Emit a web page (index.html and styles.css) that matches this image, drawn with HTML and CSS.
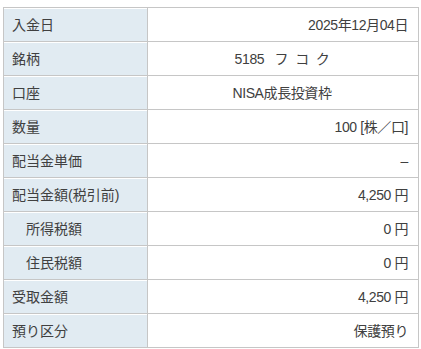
FILE: index.html
```html
<!DOCTYPE html>
<html lang="ja">
<head>
<meta charset="utf-8">
<link rel="stylesheet" href="styles.css">
</head>
<body>
<table class="detail">
  <tr><th>入金日</th><td>2025年12月04日</td></tr>
  <tr><th>銘柄</th><td class="center">5185&nbsp;&nbsp;&nbsp;フ&nbsp;&nbsp;コ&nbsp;&nbsp;ク</td></tr>
  <tr><th>口座</th><td class="center">NISA成長投資枠</td></tr>
  <tr><th>数量</th><td>100 [株／口]</td></tr>
  <tr><th>配当金単価</th><td>–</td></tr>
  <tr><th>配当金額(税引前)</th><td>4,250 円</td></tr>
  <tr><th class="sub">所得税額</th><td>0 円</td></tr>
  <tr><th class="sub">住民税額</th><td>0 円</td></tr>
  <tr><th>受取金額</th><td>4,250 円</td></tr>
  <tr><th>預り区分</th><td>保護預り</td></tr>
</table>
</body>
</html>
```

FILE: styles.css
```css
html, body {
  background: #ffffff;
}
body {
  margin: 7px 0 0 3px;
  font-family: "Liberation Sans", "Noto Sans CJK JP", sans-serif;
  font-size: 14px;
  color: #404040;
}
.detail {
  border-collapse: collapse;
  width: 416px;
  table-layout: fixed;
}
.detail th,
.detail td {
  border: 1px solid #c6c6c6;
  height: 33px;
  padding: 0 10px 0 8px;
  box-sizing: border-box;
  vertical-align: middle;
  line-height: 18px;
  white-space: nowrap;
}
.detail tr {
  height: 34px;
}
.detail th {
  width: 144px;
  background: #e1ebf2;
  box-shadow: inset 0 1px 0 #ffffff;
  text-align: left;
  font-weight: normal;
}
.detail th.sub {
  padding-left: 22px;
}
.detail td {
  text-align: right;
  letter-spacing: -0.4px;
}
.detail td.center {
  text-align: center;
}
```
